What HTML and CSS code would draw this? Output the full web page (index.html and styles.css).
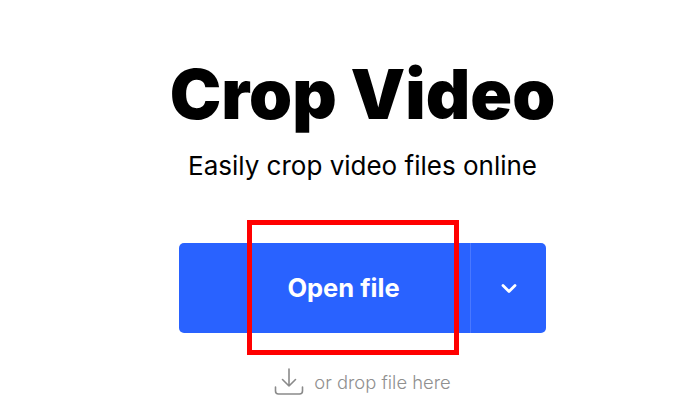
FILE: index.html
```html
<!DOCTYPE html>
<html lang="en">
<head>
  <meta charset="UTF-8" />
  <title>Crop Video</title>
  <link rel="stylesheet" href="styles.css">
</head>
<body>

  <main class="tool">
    <h1 class="tool-title">Crop Video</h1>
    <p class="tool-subtitle">Easily crop video files online</p>

    <!-- Open file + dropdown -->
    <div class="open-group">
      <button class="open-button">Open file</button>
      <button class="open-more" aria-label="More options">
        <svg width="16" height="16" viewBox="0 0 16 16" fill="none" stroke="#fff" stroke-width="2.8" stroke-linecap="round" stroke-linejoin="round">
          <path d="M2 5.500 8 11.500l6-6" />
        </svg>
      </button>
    </div>

    <!-- Drop hint -->
    <div class="drop-hint">
      <svg width="30" height="28" viewBox="0 0 30 28" fill="none" stroke="#8a8a8a" stroke-width="1.6" stroke-linecap="round" stroke-linejoin="round">
        <path d="M15 1v17M8.500 11.500 15 18l6.500-6.500" />
        <path d="M1.500 19v4a3 3 0 0 0 3 3h21a3 3 0 0 0 3-3v-4" />
      </svg>
      <span>or drop file here</span>
    </div>
  </main>

  <!-- Red highlight drawn over the screenshot -->
  <div class="highlight"></div>

</body>
</html>
```

FILE: styles.css
```css
body {
  margin: 0;
  background: #fff;
  font-family: Inter, "Liberation Sans", sans-serif;
}

.tool {
  display: flex;
  flex-direction: column;
  align-items: center;
  padding-top: 52px;
  padding-left: 25px;
}

.tool-title {
  margin: 0;
  font-size: 69px;
  line-height: 84px;
  font-weight: 900;
  color: #000;
}

.tool-subtitle {
  margin: 15px 0 0;
  font-size: 26px;
  line-height: 30px;
  color: #000;
}

.open-group {
  display: flex;
  width: 367px;
  height: 90px;
  margin-top: 62px;
  border-radius: 5px;
  overflow: hidden;
  background: #2962ff;
}

.open-button,
.open-more {
  border: 0;
  padding: 0;
  background: none;
  color: #fff;
  font-family: inherit;
}

.open-button {
  flex: 1;
  padding-left: 38px;
  padding-bottom: 2px;
  font-size: 25.5px;
  font-weight: 700;
}

.open-more {
  display: flex;
  align-items: center;
  justify-content: center;
  width: 76px;
  border-left: 1px solid #4a78ff;
}

.drop-hint {
  display: flex;
  align-items: center;
  gap: 10px;
  margin-top: 35px;
  font-size: 18.4px;
  font-weight: 300;
  color: #909090;
}

.highlight {
  position: absolute;
  left: 247px;
  top: 220px;
  width: 202px;
  height: 125px;
  border: 5px solid #f00;
}
```
